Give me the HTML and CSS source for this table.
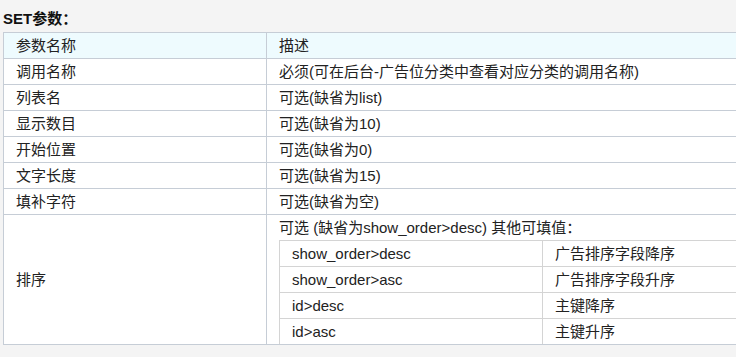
FILE: index.html
```html
<!DOCTYPE html>
<html lang="zh">
<head>
<meta charset="utf-8">
<link rel="stylesheet" href="styles.css">
</head>
<body>
<div class="page">
  <h3 class="title">SET参数：</h3>
  <div class="clip">
  <table class="params">
    <colgroup><col class="c1"><col class="c2"></colgroup>
    <thead>
      <tr><th>参数名称</th><th>描述</th></tr>
    </thead>
    <tbody>
      <tr><td>调用名称</td><td>必须(可在后台-广告位分类中查看对应分类的调用名称)</td></tr>
      <tr><td>列表名</td><td>可选(缺省为list)</td></tr>
      <tr><td>显示数目</td><td>可选(缺省为10)</td></tr>
      <tr><td>开始位置</td><td>可选(缺省为0)</td></tr>
      <tr><td>文字长度</td><td>可选(缺省为15)</td></tr>
      <tr><td>填补字符</td><td>可选(缺省为空)</td></tr>
      <tr>
        <td>排序</td>
        <td class="nested">
          <div class="line">可选 (缺省为show_order&gt;desc) 其他可填值：</div>
          <table class="sub">
            <colgroup><col class="s1"><col class="s2"></colgroup>
            <tr><td>show_order&gt;desc</td><td>广告排序字段降序</td></tr>
            <tr><td>show_order&gt;asc</td><td>广告排序字段升序</td></tr>
            <tr><td>id&gt;desc</td><td>主键降序</td></tr>
            <tr><td>id&gt;asc</td><td>主键升序</td></tr>
          </table>
        </td>
      </tr>
    </tbody>
  </table>
  </div>
</div>
</body>
</html>
```
FILE: styles.css
```css
html, body {
  margin: 0;
  padding: 0;
  overflow: hidden;
  background: #f4f4f4;
}
.page {
  padding: 8px 0 0 3px;
  font-family: "Liberation Sans", "Noto Sans CJK SC", sans-serif;
  color: #222;
  font-size: 15px;
}
.title {
  margin: 0 0 2px 0;
  font-size: 15px;
  line-height: 22px;
  font-weight: bold;
  color: #111;
}
.clip {
  overflow: hidden;
}
.params {
  border-collapse: collapse;
  table-layout: fixed;
  width: 800px;
  background: #fff;
}
.params .c1 { width: 263px; }
.params .c2 { width: 537px; }
.params th, .params td {
  border: 1px solid #c6cdd6;
  padding: 0 12px;
  height: 25px;
  line-height: 25px;
  text-align: left;
  font-weight: normal;
  vertical-align: middle;
}
.params thead th {
  background: #eefbfe;
}
.params td.nested {
  padding: 0 0 0 12px;
  vertical-align: top;
}
.line {
  height: 25px;
  line-height: 25px;
}
.sub {
  border-collapse: collapse;
  table-layout: fixed;
  width: 530px;
}
.sub .s1 { width: 263px; }
.sub .s2 { width: 267px; }
.params .sub td {
  border: 1px solid #d4d4d4;
  padding: 0 12px;
  height: 25px;
  line-height: 25px;
}
.params .sub tr:last-child td {
  border-bottom: none;
}
```
